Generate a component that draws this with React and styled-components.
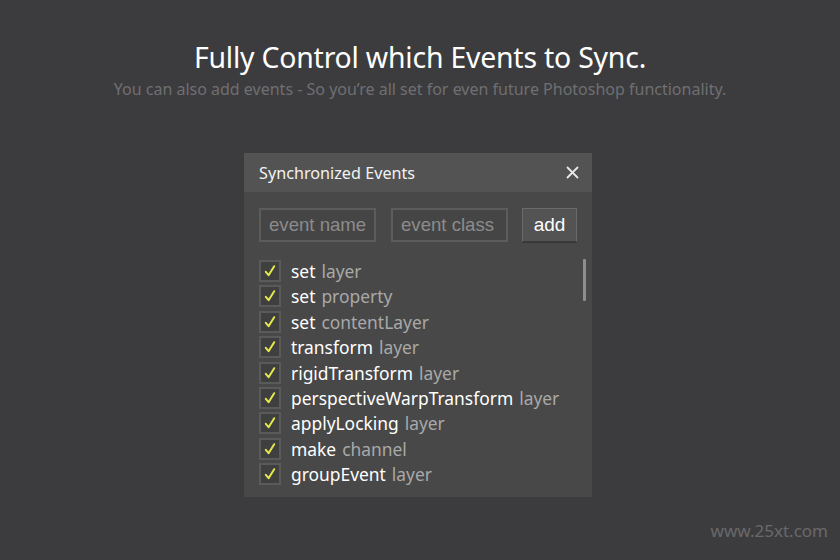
import styled, { createGlobalStyle } from 'styled-components'

const GlobalStyle = createGlobalStyle`
  html, body {
    margin: 0;
    padding: 0;
    background: #3c3c3e;
  }
  body {
    width: 840px;
    height: 560px;
    overflow: hidden;
    font-family: 'Noto Sans', 'Open Sans', sans-serif;
  }
`

const events = [
  ['set', 'layer'],
  ['set', 'property'],
  ['set', 'contentLayer'],
  ['transform', 'layer'],
  ['rigidTransform', 'layer'],
  ['perspectiveWarpTransform', 'layer'],
  ['applyLocking', 'layer'],
  ['make', 'channel'],
  ['groupEvent', 'layer'],
]

const CheckIcon = () => (
  <svg width='14' height='14' viewBox='0 0 14 14'>
    <path d='M2.8 7.8 L5.6 11.2 L11.2 2.2' fill='none' stroke='#e3e84c' strokeWidth='2' strokeLinecap='round' strokeLinejoin='round' />
  </svg>
)

const CloseIcon = () => (
  <svg width='13' height='13' viewBox='0 0 13 13'>
    <path d='M1.5 1.5 L11.5 11.5 M11.5 1.5 L1.5 11.5' stroke='#e8e8e8' strokeWidth='1.8' strokeLinecap='round' />
  </svg>
)

export default function App() {
  return (
    <>
      <GlobalStyle />
      <Page>
        <Title>Fully Control which Events to Sync.</Title>
        <Subtitle>You can also add events - So you’re all set for even future Photoshop functionality.</Subtitle>
        <Panel>
          <Header>
            <HeaderTitle>Synchronized Events</HeaderTitle>
            <CloseButton><CloseIcon /></CloseButton>
          </Header>
          <Body>
            <InputRow>
              <Field placeholder='event name' />
              <Field placeholder='event class' />
              <AddButton>add</AddButton>
            </InputRow>
            <List>
              {events.map(([name, cls], i) => (
                <Row key={i}>
                  <Box><CheckIcon /></Box>
                  <EventName>{name}</EventName>
                  <EventClass>{cls}</EventClass>
                </Row>
              ))}
              <Scrollbar />
            </List>
          </Body>
        </Panel>
        <Watermark>www.25xt.com</Watermark>
      </Page>
    </>
  )
}

const Page = styled.div`
  position: relative;
  width: 840px;
  height: 560px;
  display: flex;
  flex-direction: column;
  align-items: center;
  padding-top: 37px;
  box-sizing: border-box;
`

const Title = styled.h1`
  margin: 0;
  font-size: 28.4px;
  font-weight: 400;
  color: #ffffff;
  line-height: 40px;
  letter-spacing: -0.2px;
`

const Subtitle = styled.p`
  margin: 0;
  font-size: 16px;
  color: #6f6f71;
  line-height: 24px;
`

const Panel = styled.div`
  margin-top: 52px;
  margin-left: -4px;
  width: 348px;
  background: #484848;
  display: flex;
  flex-direction: column;
`

const Header = styled.div`
  height: 39px;
  background: #535353;
  display: flex;
  align-items: center;
  justify-content: space-between;
  padding: 0 13px 0 15px;
`

const HeaderTitle = styled.span`
  font-size: 16.2px;
  color: #f2f2f2;
`

const CloseButton = styled.span`
  display: flex;
  align-items: center;
`

const Body = styled.div`
  padding: 16px 15px 12px 15px;
`

const InputRow = styled.div`
  display: flex;
  align-items: center;
  gap: 15px;
`

const Field = styled.input`
  width: 117px;
  height: 34px;
  box-sizing: border-box;
  background: #454545;
  border: 2px solid #5c5c5c;
  color: #dddddd;
  font-family: 'Liberation Sans', Arial, sans-serif;
  font-size: 18.6px;
  padding: 0 0 0 8px;
  outline: none;
  &::placeholder {
    color: #8c8c8c;
  }
`

const AddButton = styled.button`
  margin-left: -1px;
  width: 55px;
  height: 34px;
  background: #535353;
  border: 1px solid #6a6a6a;
  border-bottom-color: #3a3a3a;
  box-shadow: 0 1px 0 #383838;
  color: #ffffff;
  font-family: 'Liberation Sans', Arial, sans-serif;
  font-size: 19px;
  padding: 0;
`

const List = styled.div`
  position: relative;
  margin-top: 18px;
  display: flex;
  flex-direction: column;
  gap: 3.4px;
`

const Row = styled.div`
  display: flex;
  align-items: center;
  height: 22px;
`

const Box = styled.span`
  width: 22px;
  height: 22px;
  box-sizing: border-box;
  border: 2px solid #5a5a5a;
  background: #3f3f3f;
  display: flex;
  align-items: center;
  justify-content: center;
  margin-right: 10px;
`

const EventName = styled.span`
  font-size: 17.4px;
  color: #ffffff;
  margin-right: 6px;
`

const EventClass = styled.span`
  font-size: 17.4px;
  color: #a9a9a9;
`

const Scrollbar = styled.div`
  position: absolute;
  right: -9px;
  top: -1px;
  width: 3px;
  height: 42px;
  background: #8e8e8e;
  border-radius: 1px;
`

const Watermark = styled.div`
  position: absolute;
  right: 12px;
  bottom: 18px;
  font-size: 17px;
  color: #69696b;
`
